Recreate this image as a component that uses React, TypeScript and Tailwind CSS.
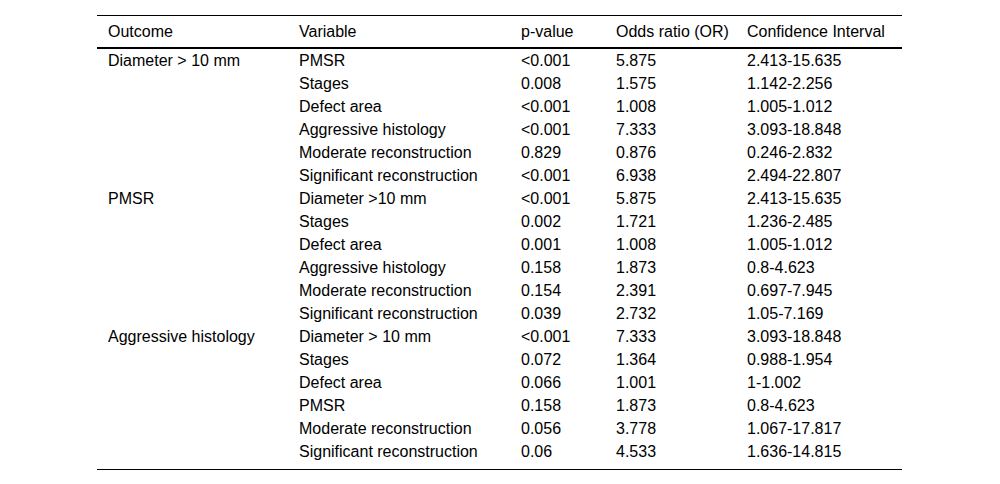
import React from "react";

const rows: [string, string, string, string, string][] = [
  ["Diameter > 10 mm", "PMSR", "<0.001", "5.875", "2.413-15.635"],
  ["", "Stages", "0.008", "1.575", "1.142-2.256"],
  ["", "Defect area", "<0.001", "1.008", "1.005-1.012"],
  ["", "Aggressive histology", "<0.001", "7.333", "3.093-18.848"],
  ["", "Moderate reconstruction", "0.829", "0.876", "0.246-2.832"],
  ["", "Significant reconstruction", "<0.001", "6.938", "2.494-22.807"],
  ["PMSR", "Diameter >10 mm", "<0.001", "5.875", "2.413-15.635"],
  ["", "Stages", "0.002", "1.721", "1.236-2.485"],
  ["", "Defect area", "0.001", "1.008", "1.005-1.012"],
  ["", "Aggressive histology", "0.158", "1.873", "0.8-4.623"],
  ["", "Moderate reconstruction", "0.154", "2.391", "0.697-7.945"],
  ["", "Significant reconstruction", "0.039", "2.732", "1.05-7.169"],
  ["Aggressive histology", "Diameter > 10 mm", "<0.001", "7.333", "3.093-18.848"],
  ["", "Stages", "0.072", "1.364", "0.988-1.954"],
  ["", "Defect area", "0.066", "1.001", "1-1.002"],
  ["", "PMSR", "0.158", "1.873", "0.8-4.623"],
  ["", "Moderate reconstruction", "0.056", "3.778", "1.067-17.817"],
  ["", "Significant reconstruction", "0.06", "4.533", "1.636-14.815"],
];

const headers = ["Outcome", "Variable", "p-value", "Odds ratio (OR)", "Confidence Interval"];

export default function App() {
  return (
    <div
      className="w-[1000px] h-[484px] bg-white text-black pt-[15px] pl-[97px]"
      style={{ fontFamily: '"Liberation Sans", Arial, sans-serif' }}
    >
      <table className="w-[805px] table-fixed border-collapse text-[16px] leading-[23px]">
        <colgroup>
          <col className="w-[191px]" />
          <col className="w-[222px]" />
          <col className="w-[95px]" />
          <col className="w-[131px]" />
          <col className="w-[166px]" />
        </colgroup>
        <thead>
          <tr className="border-t border-black border-b-2">
            {headers.map((h) => (
              <th key={h} className="text-left font-normal pl-[11px] h-[32px] align-middle">
                {h}
              </th>
            ))}
          </tr>
        </thead>
        <tbody className="border-b border-black">
          {rows.map((r, i) => (
            <tr key={i}>
              {r.map((c, j) => (
                <td
                  key={j}
                  className={`pl-[11px] h-[23px] align-middle whitespace-nowrap ${i === rows.length - 1 ? "pb-[6px]" : ""}`}
                >
                  {c}
                </td>
              ))}
            </tr>
          ))}
        </tbody>
      </table>
    </div>
  );
}
